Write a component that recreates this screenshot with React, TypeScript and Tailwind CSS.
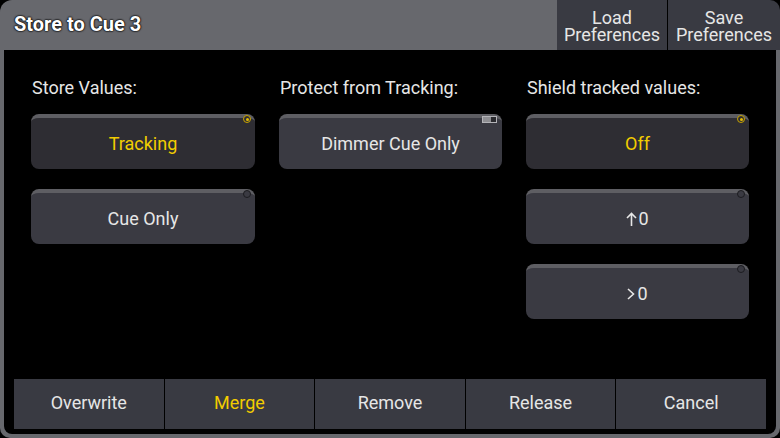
import React from "react";

type Opt = {
    label: React.ReactNode;
    active?: boolean;
    kind?: "radio" | "toggle";
};

const columns: Array<{ title: string; options: Opt[] }> = [
    {
        title: "Store Values:",
        options: [
            { label: "Tracking", active: true },
            { label: "Cue Only" },
        ],
    },
    {
        title: "Protect from Tracking:",
        options: [{ label: "Dimmer Cue Only", kind: "toggle" }],
    },
    {
        title: "Shield tracked values:",
        options: [
            { label: "Off", active: true },
            {
                label: (
                    <span className="flex items-center">
                        <svg width="11" height="14" viewBox="0 0 11 14" className="mr-[1px]">
                            <path d="M5.5 1.5V14M1 6l4.5-4.5L10 6" stroke="#e6e6e6" strokeWidth="1.6" fill="none" />
                        </svg>
                        0
                    </span>
                ),
            },
            {
                label: (
                    <span className="flex items-center">
                        <svg width="8" height="12" viewBox="0 0 8 12" className="mr-[2px] mt-[1px]">
                            <path d="M1 1l5.5 5L1 11" stroke="#e6e6e6" strokeWidth="1.6" fill="none" />
                        </svg>
                        0
                    </span>
                ),
            },
        ],
    },
];

function OptionButton({ opt }: { opt: Opt }) {
    return (
        <div
            className={
                "relative flex h-[55px] items-center justify-center rounded-[8px] border-t-4 border-[#5e5e63] text-[18px] " +
                (opt.active ? "bg-[#2e2d33] text-[#f2cc00]" : "bg-[#3a3a42] text-[#e6e6e6]")
            }
        >
            {opt.label}
            {opt.kind === "toggle" ? (
                <div className="absolute right-[5px] top-[-2px] flex h-[7px] w-[15px] border border-[#b4b4b8] bg-[#2a2a2e]">
                    <div className="h-full w-[8px] bg-[#8e8e92]" />
                </div>
            ) : opt.active ? (
                <div className="absolute right-[4px] top-[-3px] flex h-[8px] w-[8px] items-center justify-center rounded-full border-[1.5px] border-[#c9a400] bg-[#2e2d33]">
                    <div className="h-[3px] w-[3px] rounded-full bg-[#e6bd00]" />
                </div>
            ) : (
                <div className="absolute right-[4px] top-[-3px] h-[8px] w-[8px] rounded-full border-[1.5px] border-[#1c1c20] bg-[#3a3a42]" />
            )}
        </div>
    );
}

export default function App() {
    const bottom = ["Overwrite", "Merge", "Remove", "Release", "Cancel"];

    return (
        <div
            className="h-[438px] w-[780px] overflow-hidden bg-black"
            style={{ fontFamily: "Roboto, 'Noto Sans', sans-serif" }}
        >
            <div className="flex h-full flex-col rounded-tl-[12px] rounded-tr-[10px] rounded-b-[10px] bg-[#67686d]">
                <div className="flex h-[50px] shrink-0">
                    <div className="flex flex-1 items-center pl-[14px] pb-[2px] text-[20px] font-bold text-white [text-shadow:0_0_2px_#000,0_0_2px_#000,0_0_1px_#000]">
                        Store to Cue 3
                    </div>
                    <div className="flex gap-px bg-black">
                        <div className="flex w-[110px] items-center justify-center bg-[#393a42] pt-[1px] text-center text-[18px] leading-[17px] text-[#e6e6e6]">
                            <span className="block">
                                Load
                                <br />
                                Preferences
                            </span>
                        </div>
                        <div className="flex w-[112px] items-center justify-center rounded-tr-[10px] bg-[#393a42] pt-[1px] text-center text-[18px] leading-[17px] text-[#e6e6e6]">
                            <span className="block">
                                Save
                                <br />
                                Preferences
                            </span>
                        </div>
                    </div>
                </div>

                <div className="mx-[4px] mb-[4px] flex flex-1 flex-col rounded-b-[8px] bg-black">
                    <div className="grid flex-1 grid-cols-[224px_223px_223px] gap-x-[24px] pl-[27px] pt-[28px]">
                        {columns.map((col) => (
                            <div key={col.title} className="flex flex-col">
                                <div className="mb-[16px] h-[20px] pl-px text-[18px] leading-[20px] text-[#e6e6e6]">
                                    {col.title}
                                </div>
                                <div className="flex flex-col gap-[20px]">
                                    {col.options.map((o, i) => (
                                        <OptionButton key={i} opt={o} />
                                    ))}
                                </div>
                            </div>
                        ))}
                    </div>

                    <div className="mb-[5px] ml-[10px] mr-[10px] flex h-[50px] gap-px">
                        {bottom.map((b) => (
                            <div
                                key={b}
                                className={
                                    "flex flex-1 items-center justify-center bg-[#393a42] pb-[3px] text-[18px] " +
                                    (b === "Merge" ? "text-[#f2cc00]" : "text-[#e6e6e6]")
                                }
                            >
                                {b}
                            </div>
                        ))}
                    </div>
                </div>
            </div>
        </div>
    );
}
